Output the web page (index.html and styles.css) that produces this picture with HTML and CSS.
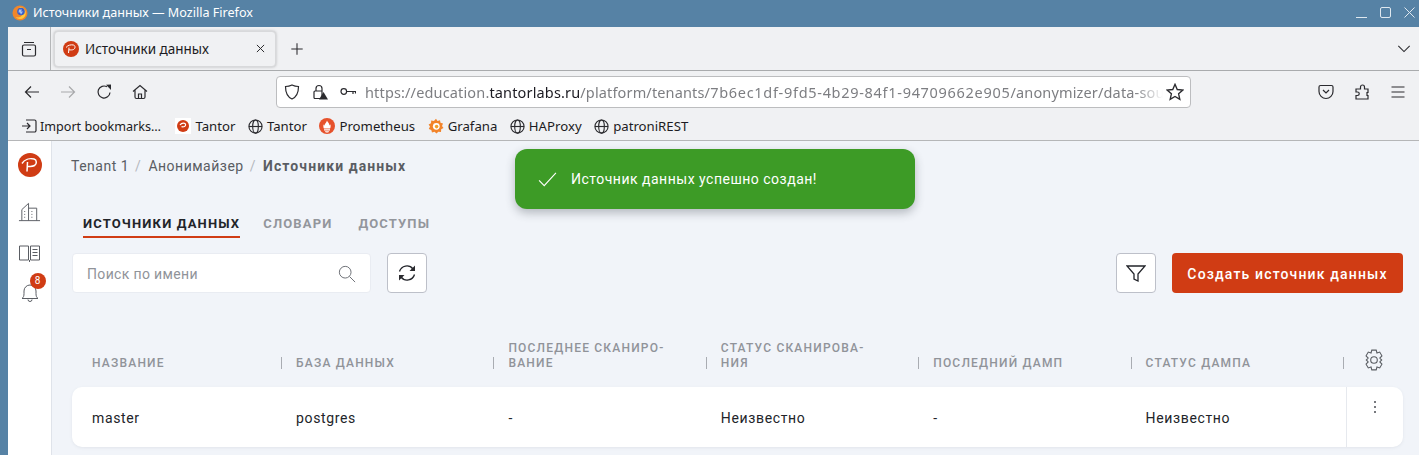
FILE: index.html
```html
<!DOCTYPE html>
<html lang="ru">

<head>
  <meta charset="utf-8">
  <title>Источники данных — Mozilla Firefox</title>
  <link rel="stylesheet" href="styles.css">
</head>

<body>
  <div class="window">
    <!-- Window title bar -->
    <div class="titlebar">
      <svg class="ff-logo" viewBox="0 0 16 16">
        <circle cx="8" cy="8" r="7.500" fill="#f0862a"/>
        <path d="M8 2a6 6 0 0 1 5.800 6.500A5.800 5.800 0 0 1 8 14 6 6 0 0 1 3.600 12c2 .8 5 .6 6.200-1.400C11 8.500 9.500 6.500 7.500 6.800L6 5.500Z" fill="#ffc93c"/>
        <circle cx="9" cy="6.500" r="3.800" fill="#3a5fc8"/>
        <path d="M7 4.500h3l-1 2h2l-2 3-1-2H6.500Z" fill="#a9c4f5"/>
      </svg>
      <span class="title-text">Источники данных — Mozilla Firefox</span>
      <div class="win-buttons">
        <svg viewBox="0 0 11 11"><path d="M0 10.500h11"/></svg>
        <svg viewBox="0 0 11 11"><rect x=".5" y=".5" width="10" height="10" rx="1.500"/></svg>
        <svg viewBox="0 0 11 11"><path d="M.5.500l10 10M10.500.500l-10 10"/></svg>
      </div>
    </div>

    <div class="browser">
      <!-- Tabs -->
      <div class="tabstrip">
        <div class="tabstrip-left">
          <svg class="icon" viewBox="0 0 16 16">
            <path d="M3 1.500h10M1.500 5.500A1.500 1.500 0 0 1 3 4h10a1.500 1.500 0 0 1 1.500 1.500v8A1.500 1.500 0 0 1 13 15H3a1.500 1.500 0 0 1-1.500-1.500ZM6 8.500h4"/>
          </svg>
        </div>
        <div class="tab">
          <svg class="favicon" viewBox="0 0 16 16">
            <circle cx="8" cy="8" r="8" fill="#d03c14"/>
            <path d="M3 6.500C5 4 8 3.500 10.500 4c2 .5 2 3.500 0 4.500-1 .5-3 .5-4.500.3M6 6.500 5.500 12" fill="none" stroke="#fff" stroke-width="1"/>
          </svg>
          <span class="tab-title">Источники данных</span>
          <svg class="tab-close" viewBox="0 0 10 10"><path d="M1 1l8 8M9 1 1 9"/></svg>
        </div>
        <svg class="icon new-tab" viewBox="0 0 16 16"><path d="M8 1.500v13M1.500 8h13"/></svg>
        <svg class="icon tabs-menu" viewBox="0 0 16 16"><path d="M1.500 4.500 8 11l6.500-6.500"/></svg>
      </div>

      <!-- Navigation toolbar -->
      <div class="toolbar">
        <div class="nav-buttons">
          <svg class="icon" viewBox="0 0 16 16"><path d="M15 8H1.500M7 2.500 1.500 8 7 13.500"/></svg>
          <svg class="icon dim" viewBox="0 0 16 16"><path d="M1 8h13.500M9 2.500 14.500 8 9 13.500"/></svg>
          <svg class="icon" viewBox="0 0 16 16"><path d="M14 8.500A6 6 0 1 1 11 2.800"/><path class="solid" d="M10 .8 15 .5V6Z"/></svg>
          <svg class="icon" viewBox="0 0 16 16"><path d="M1 7.500 8 1.500l7 6M3 6v7a1.500 1.500 0 0 0 1.500 1.500h7A1.500 1.500 0 0 0 13 13V6M6.500 14.500V10h3v4.500"/></svg>
        </div>
        <div class="urlbar">
          <svg class="icon" viewBox="0 0 16 16"><path d="M8 1C6 2 4 2.500 1.500 2.500 1.500 9 3.500 13 8 15c4.500-2 6.500-6 6.500-12.500C12 2.500 10 2 8 1Z"/></svg>
          <svg class="icon lock" viewBox="0 0 16 16">
            <path d="M3 7h7v7.500H3a1 1 0 0 1-1-1V8a1 1 0 0 1 1-1ZM4 7V4.500a3 3 0 0 1 6 0V7"/>
            <path class="solid" d="M11.500 8 16 15.500H7Z"/>
          </svg>
          <svg class="icon key" viewBox="0 0 16 16"><circle cx="3.800" cy="7.500" r="2.800"/><path d="M6.500 7.500H16M13 7.500v2.500M15.500 7.500v2"/></svg>
          <div class="url"><span>https://education.</span><b>tantorlabs.ru</b><span>/platform/tenants/</span><span class="url-id">7b6ec1df-9fd5-4b29-84f1-94709662e905</span><span>/anonymizer/data-sources</span></div>
          <svg class="icon star" viewBox="0 0 16 16"><path d="M8 1.200 10 5.800l5 .5-3.800 3.300 1.100 4.900L8 12l-4.300 2.500 1.100-4.900L1 6.300l5-.5Z"/></svg>
        </div>
        <div class="toolbar-right">
          <svg class="icon" viewBox="0 0 16 16"><path d="M2.500 1.500h11A1.500 1.500 0 0 1 15 3v4.500a7 7 0 0 1-14 0V3a1.500 1.500 0 0 1 1.500-1.500ZM5 6l3 3 3-3"/></svg>
          <svg class="icon" viewBox="0 0 16 16"><path d="M2 15v-3.500h1.500a1.700 1.700 0 0 0 0-3.500H2V5h4.500V3a2 2 0 0 1 4 0v2H14v3.500h-1v3h1V15Z"/></svg>
          <svg class="icon" viewBox="0 0 16 16"><path d="M1.500 3h13M1.500 8h13M1.500 13h13"/></svg>
        </div>
      </div>

      <!-- Bookmarks -->
      <div class="bookmarks">
        <div class="bookmark import">
          <svg class="icon" viewBox="0 0 16 16"><path d="M1 8h8M6 5l3 3-3 3M5 2h8.500A1.500 1.500 0 0 1 15 3.500v9a1.500 1.500 0 0 1-1.500 1.500H5"/></svg>
          Import bookmarks…
        </div>
        <div class="bookmark">
          <span class="fav-white">
            <svg viewBox="0 0 16 16">
              <circle cx="8" cy="8" r="6" fill="#d03c14"/>
              <path d="M5 7c1-1.500 3-2 4.500-1.700 1.500.4 1.500 2.500 0 3.200-.8.400-2 .4-3 .2" fill="none" stroke="#fff" stroke-width="1.200"/>
            </svg>
          </span>
          Tantor
        </div>
        <div class="bookmark">
          <svg class="icon globe" viewBox="0 0 16 16"><circle cx="8" cy="8" r="7"/><ellipse cx="8" cy="8" rx="3" ry="7"/><path d="M1 8h14"/></svg>
          Tantor
        </div>
        <div class="bookmark">
          <svg class="favicon" viewBox="0 0 16 16">
            <circle cx="8" cy="8" r="8" fill="#e6522c"/>
            <path d="M8 2.500c.5 2 2.500 2.500 2.500 5 .5-.5.800-1 .8-1.300C12 8 11.500 10 11 10.500H5C4.500 10 4 8 4.700 6.200c0 .500.300 1 .800 1.300C5.500 5.500 7.500 5 8 2.500ZM5 11.200h6V12.500H5ZM6 13.200h4c0 1-1 1.300-2 1.300s-2-.3-2-1.300Z" fill="#fff"/>
          </svg>
          Prometheus
        </div>
        <div class="bookmark">
          <svg class="favicon" viewBox="0 0 16 16">
            <path d="M8 .8 9.500 3l2.500-.8.500 2.500 2.500.8-1 2.500 1.500 2-2.300 1.300-.2 2.700-2.700-.3L8.500 15.500 6.500 13.700l-2.500.8-.7-2.500L.8 11l1.200-2.400L.6 6.500 3 5.300l.2-2.700 2.700.5Z" fill="#f2842a"/>
            <circle cx="8.300" cy="8.300" r="3.400" fill="#fff"/>
            <circle cx="8.600" cy="8.600" r="1.800" fill="#f2a02a"/>
          </svg>
          Grafana
        </div>
        <div class="bookmark">
          <svg class="icon globe" viewBox="0 0 16 16"><circle cx="8" cy="8" r="7"/><ellipse cx="8" cy="8" rx="3" ry="7"/><path d="M1 8h14"/></svg>
          HAProxy
        </div>
        <div class="bookmark">
          <svg class="icon globe" viewBox="0 0 16 16"><circle cx="8" cy="8" r="7"/><ellipse cx="8" cy="8" rx="3" ry="7"/><path d="M1 8h14"/></svg>
          patroniREST
        </div>
      </div>

      <!-- Page -->
      <div class="page">
        <aside class="sidebar">
          <svg class="side-logo" viewBox="0 0 24 24">
            <circle cx="12" cy="12" r="12" fill="#d03c14"/>
            <path d="M4 10.500c2.500-4 7.500-5.500 12-4.500 3 .8 3 5 .5 6.500-2 1.200-5 1-7.500.7M9.500 9 9 18.500" fill="none" stroke="#fff" stroke-width="1.500"/>
          </svg>
          <svg class="side-icon first" viewBox="0 0 24 20"><path d="M1 19h22M4 19V7.500L11 1v18M11 6h8.500v13M6.500 9.500h1M6.500 12.500h1M6.500 15.500h1M14 9.500h1M14 12.500h1M14 15.500h1"/></svg>
          <svg class="side-icon" viewBox="0 0 22 20"><path d="M1 2h9v14H1ZM12 2h9v14h-9ZM11 16v2M14 5.500h5M14 8.500h5M14 11.500h5"/></svg>
          <div class="bell-wrap">
            <svg class="side-icon bell" viewBox="0 0 20 22"><path d="M2 16.500c1.500-1 2-2.500 2-5V9a6 6 0 0 1 12 0v2.500c0 2.500.5 4 2 5ZM8 17.500a2 2 0 0 0 4 0"/></svg>
            <span class="badge">8</span>
          </div>
        </aside>

        <main class="content">
          <nav class="breadcrumbs">
            <span>Tenant 1</span><i>/</i><span>Анонимайзер</span><i>/</i><b>Источники данных</b>
          </nav>

          <div class="tabs">
            <span class="page-tab active">Источники данных</span>
            <span class="page-tab">Словари</span>
            <span class="page-tab">Доступы</span>
          </div>

          <div class="controls">
            <div class="search">
              <span>Поиск по имени</span>
              <svg viewBox="0 0 20 20"><circle cx="8" cy="8" r="6.500"/><path d="M12.800 12.800 19 19"/></svg>
            </div>
            <button class="square-btn refresh">
              <svg viewBox="0 0 20 20"><path d="M2.500 8.500A7.700 7.700 0 0 1 16 6M17.500 11.500A7.700 7.700 0 0 1 4 14"/><path class="solid" d="M18 2.500v5.500h-5.500ZM2 17.500V12h5.500Z"/></svg>
            </button>
            <button class="square-btn filter">
              <svg viewBox="0 0 20 20"><path d="M1 3h18l-7 8v7l-4-2v-5Z"/></svg>
            </button>
            <button class="create-btn">Создать источник данных</button>
          </div>

          <div class="table-head">
            <div class="th first"><span>Название</span><i></i></div>
            <div class="th"><span>База данных</span><i></i></div>
            <div class="th"><span>Последнее сканиро-<br>вание</span><i></i></div>
            <div class="th"><span>Статус сканирова-<br>ния</span><i></i></div>
            <div class="th"><span>Последний дамп</span><i></i></div>
            <div class="th"><span>Статус дампа</span><i></i></div>
            <svg class="gear" viewBox="0 0 20 20">
              <circle cx="10" cy="10" r="3"/>
              <path d="M8 1h4l.7 2.600 2.500-.8 2 3.400-1.900 2L17 10l-1.700 1.800 1.900 2-2 3.400-2.500-.8L12 19H8l-.7-2.600-2.500.8-2-3.400 1.900-2L3 10l1.700-1.800-1.900-2 2-3.400 2.500.8Z"/>
            </svg>
          </div>

          <div class="table-row">
            <div class="td first">master</div>
            <div class="td">postgres</div>
            <div class="td">-</div>
            <div class="td">Неизвестно</div>
            <div class="td">-</div>
            <div class="td">Неизвестно</div>
            <div class="td-actions">
              <svg viewBox="0 0 4 14"><circle cx="2" cy="2" r="1"/><circle cx="2" cy="7" r="1"/><circle cx="2" cy="12" r="1"/></svg>
            </div>
          </div>
        </main>

        <!-- Notification lies over the page -->
        <div class="toast">
          <svg viewBox="0 0 20 16"><path d="M1 9l5.500 5.500L19 1"/></svg>
          <span>Источник данных успешно создан!</span>
        </div>
      </div>
    </div>
  </div>
</body>

</html>
```

FILE: styles.css
```css
/* Reset */
* {
  box-sizing: border-box;
}

body {
  margin: 0;
  background-color: #5682a5;
  font-family: "Noto Sans", sans-serif;
}

svg {
  display: block;
  flex: none;
}

.window {
  display: flex;
  flex-direction: column;
  height: 455px;
  overflow: hidden;
}

/* Title bar */
.titlebar {
  display: flex;
  align-items: center;
  height: 27px;
  padding: 0 4px 2px 12px;
  color: #fff;
  font-size: 12.6px;
}

.ff-logo {
  width: 16px;
  height: 16px;
  margin-right: 5px;
}

.win-buttons {
  display: flex;
  gap: 13px;
  margin-left: auto;
}

.win-buttons svg {
  width: 11px;
  height: 11px;
  fill: none;
  stroke: #dfe8ef;
  stroke-width: 1;
}

/* Browser chrome */
.browser {
  display: flex;
  flex-direction: column;
  flex: 1;
  margin-left: 8px;
  min-height: 0;
  background-color: #f0f1f3;
  color: #1c1b22;
}

.icon {
  width: 16px;
  height: 16px;
  fill: none;
  stroke: #2a2a2e;
  stroke-width: 1.2;
}

.solid {
  fill: #2a2a2e;
  stroke: none;
}

.tabstrip {
  display: flex;
  align-items: center;
  height: 44px;
  border-bottom: 1px solid #a9abad;
}

.tabstrip-left {
  display: flex;
  align-items: center;
  justify-content: center;
  width: 43px;
  height: 100%;
  border-right: 1px solid #b4b6b8;
}

.tab {
  display: flex;
  align-items: center;
  width: 222px;
  height: 36px;
  margin-left: 3px;
  padding: 0 8px;
  background-color: #f0f1f3;
  border: 1px solid #d8d9db;
  border-radius: 4px;
  box-shadow: 0 0 3px rgba(0, 0, 0, 0.25);
  font-size: 13.5px;
}

.favicon {
  width: 16px;
  height: 16px;
}

.tab-title {
  margin-left: 6px;
}

.tab-close {
  width: 9px;
  height: 9px;
  margin-left: auto;
  margin-right: 2px;
  fill: none;
  stroke: #2a2a2e;
  stroke-width: 1.1;
}

.new-tab {
  width: 14px;
  height: 14px;
  margin-left: 14px;
}

.tabs-menu {
  width: 14px;
  height: 14px;
  margin-left: auto;
  margin-right: 8px;
}

.toolbar {
  display: flex;
  align-items: center;
  height: 41px;
}

.nav-buttons {
  display: flex;
  gap: 20px;
  width: 268px;
  padding-left: 16px;
}

.dim {
  stroke: #a8a9ab;
}

.urlbar {
  display: flex;
  align-items: center;
  width: 915px;
  height: 32px;
  padding: 0 6px 0 7px;
  background-color: #fff;
  border: 1px solid #bcbdbf;
  border-radius: 4px;
}

.lock {
  margin-left: 12px;
}

.key {
  margin-left: 12px;
}

.url {
  flex: 1;
  margin-left: 9px;
  overflow: hidden;
  color: #7d7e82;
  font-size: 14.5px;
  letter-spacing: 0.15px;
  white-space: nowrap;
  -webkit-mask-image: linear-gradient(to right, #000 96.5%, transparent);
  mask-image: linear-gradient(to right, #000 96.5%, transparent);
}

.url b {
  color: #1c1b22;
  font-weight: 400;
}

.url-id {
  letter-spacing: 0.7px;
}

.star {
  width: 18px;
  height: 18px;
  margin-left: 3px;
  stroke-width: 1.2;
}

.toolbar-right {
  display: flex;
  gap: 20px;
  margin-left: auto;
  padding-right: 13px;
}

.bookmarks {
  display: flex;
  align-items: center;
  height: 29px;
  padding-left: 13px;
  gap: 12.5px;
  border-bottom: 1px solid #b5b6b8;
  font-size: 13.2px;
}

.bookmark {
  display: flex;
  align-items: center;
  gap: 4px;
}

.import {
  gap: 3px;
  margin-right: 2px;
  font-size: 12.6px;
}

.fav-white {
  width: 16px;
  height: 16px;
  background-color: #fff;
}

.globe {
  width: 15px;
  height: 15px;
}

/* Page */
.page {
  display: flex;
  position: relative;
  flex: 1;
  min-height: 0;
  background-color: #f1f4f9;
  font-family: "Roboto", sans-serif;
}

.sidebar {
  display: flex;
  flex-direction: column;
  align-items: center;
  width: 44px;
  padding-top: 12px;
  background-color: #fff;
  border-right: 1px solid #dfe3ea;
}

.side-logo {
  width: 24px;
  height: 24px;
}

.side-icon {
  width: 23px;
  height: 20px;
  fill: none;
  stroke: #5a5d63;
  stroke-width: 1;
}

.first.side-icon {
  margin-top: 25px;
}

.sidebar .side-icon + .side-icon {
  margin-top: 22px;
}

.bell-wrap {
  position: relative;
  margin-top: 18px;
}

.bell {
  width: 20px;
  height: 22px;
}

.badge {
  position: absolute;
  top: -9px;
  right: -6px;
  width: 16px;
  height: 16px;
  background-color: #d03c14;
  border-radius: 50%;
  color: #fff;
  font-size: 10px;
  line-height: 16px;
  text-align: center;
}

.content {
  flex: 1;
  min-width: 0;
  padding: 0 16px 0 20px;
}

.breadcrumbs {
  display: flex;
  align-items: center;
  height: 18px;
  margin-top: 16px;
  margin-left: -1px;
  color: #5a5d63;
  font-size: 14px;
  letter-spacing: 0.5px;
}

.breadcrumbs i {
  margin: 0 7px 0 6px;
  color: #b5b8be;
  font-style: normal;
}

.breadcrumbs b {
  font-weight: 700;
  letter-spacing: 1.1px;
}

/* Tabs inside the page */
.tabs {
  display: flex;
  gap: 23px;
  margin-top: 41px;
  padding-left: 11px;
}

.page-tab {
  padding-bottom: 4px;
  color: #93969c;
  border-bottom: 2px solid transparent;
  font-size: 13px;
  font-weight: 700;
  letter-spacing: 1.15px;
  line-height: 16px;
  text-transform: uppercase;
}

.page-tab:last-child {
  margin-left: 3px;
}

.page-tab.active {
  color: #222429;
  border-bottom-color: #d03c14;
}

.controls {
  display: flex;
  align-items: center;
  margin-top: 15px;
}

.search {
  display: flex;
  align-items: center;
  justify-content: space-between;
  width: 299px;
  height: 40px;
  padding: 1px 14px 0;
  background-color: #fff;
  border: 1px solid #e9ecf2;
  border-radius: 4px;
  color: #909399;
  font-size: 14px;
  letter-spacing: 0.35px;
}

.search svg {
  width: 18px;
  height: 18px;
  fill: none;
  stroke: #6e7177;
  stroke-width: 1.1;
}

.square-btn {
  display: flex;
  align-items: center;
  justify-content: center;
  width: 40px;
  height: 40px;
  padding: 0;
  background-color: #fff;
  border: 1px solid #bdc0c9;
  border-radius: 4px;
}

.square-btn svg {
  width: 20px;
  height: 20px;
  fill: none;
  stroke: #22242a;
  stroke-width: 1.300;
}

.refresh {
  margin-left: 16px;
}

.filter {
  margin-left: auto;
}

.create-btn {
  width: 231px;
  height: 40px;
  margin-left: 16px;
  padding: 1px 0 0;
  background-color: #d03c14;
  border: 0;
  border-radius: 4px;
  color: #fff;
  font-family: inherit;
  font-size: 14px;
  font-weight: 500;
  letter-spacing: 1.15px;
}

/* Table */
.table-head {
  display: grid;
  grid-template-columns: 210px repeat(5, 212.4px) 1fr;
  align-items: end;
  height: 55px;
  margin-top: 39px;
  padding-bottom: 16px;
}

.th {
  display: flex;
  align-items: flex-end;
  justify-content: space-between;
  padding-left: 14px;
  color: #909399;
  font-size: 12px;
  font-weight: 500;
  letter-spacing: 1.2px;
  line-height: 15px;
  text-transform: uppercase;
}

.th.first {
  padding-left: 20px;
}

.th i {
  width: 1px;
  height: 12px;
  margin-bottom: 2px;
  background-color: #a9acb2;
}

.gear {
  justify-self: center;
  width: 22px;
  height: 22px;
  margin-left: 2px;
  fill: none;
  stroke: #5a5d63;
  stroke-width: 1;
}

.table-row {
  display: grid;
  grid-template-columns: 210px repeat(5, 212.4px) 1fr;
  align-items: center;
  height: 60px;
  background-color: #fff;
  border-radius: 10px;
  box-shadow: 0 1px 3px rgba(120, 130, 150, 0.12);
  color: #222429;
  font-size: 14px;
  letter-spacing: 0.65px;
}

.td {
  padding: 1px 0 0 14px;
}

.td.first {
  padding-left: 20px;
}

.td-actions {
  display: flex;
  justify-content: center;
  height: 100%;
  margin-left: 2px;
  padding-top: 13px;
  border-left: 1px solid #e6e9ee;
}

.td-actions svg {
  width: 4px;
  height: 14px;
  fill: #4a4d53;
}

/* Success toast */
.toast {
  display: flex;
  align-items: center;
  position: absolute;
  top: 8px;
  left: 507px;
  width: 400px;
  height: 60px;
  padding-left: 23px;
  background-color: #3d9b26;
  border-radius: 12px;
  box-shadow: 0 4px 10px rgba(40, 50, 60, 0.3);
  color: #fff;
  font-size: 14px;
  letter-spacing: 0.5px;
}

.toast svg {
  width: 19px;
  height: 15px;
  margin-right: 14px;
  fill: none;
  stroke: #fff;
  stroke-width: 1.200;
}
```
